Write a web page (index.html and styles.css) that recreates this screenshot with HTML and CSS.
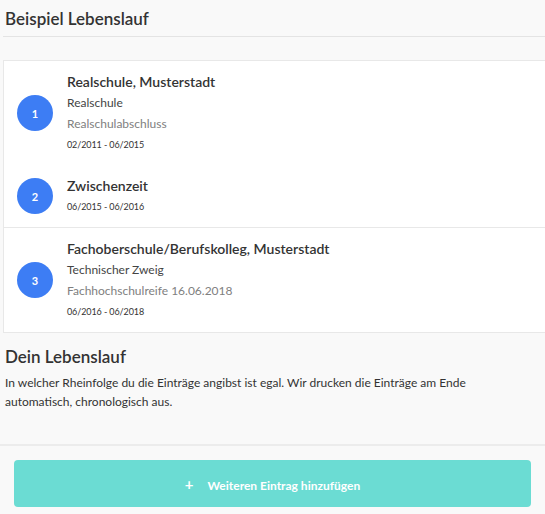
FILE: index.html
```html
<!DOCTYPE html>
<html lang="de">
<head>
    <meta charset="UTF-8">
    <title>Lebenslauf</title>
    <link rel="stylesheet" href="styles.css">
</head>
<body>

<div class="section-head">
    <h2>Beispiel Lebenslauf</h2>
</div>

<div class="example-card">
    <div class="entry">
        <div class="entry-number">1</div>
        <div class="entry-body">
            <div class="entry-title">Realschule, Musterstadt</div>
            <div class="entry-sub">Realschule</div>
            <div class="entry-degree">Realschulabschluss</div>
            <div class="entry-date">02/2011 - 06/2015</div>
        </div>
    </div>
    <div class="entry entry-line">
        <div class="entry-number">2</div>
        <div class="entry-body">
            <div class="entry-title">Zwischenzeit</div>
            <div class="entry-date">06/2015 - 06/2016</div>
        </div>
    </div>
    <div class="entry">
        <div class="entry-number">3</div>
        <div class="entry-body">
            <div class="entry-title">Fachoberschule/Berufskolleg, Musterstadt</div>
            <div class="entry-sub">Technischer Zweig</div>
            <div class="entry-degree">Fachhochschulreife 16.06.2018</div>
            <div class="entry-date">06/2016 - 06/2018</div>
        </div>
    </div>
</div>

<div class="own-cv">
    <h3>Dein Lebenslauf</h3>
    <p>In welcher Rheinfolge du die Einträge angibst ist egal. Wir drucken die Einträge am Ende automatisch, chronologisch aus.</p>
</div>

<div class="actions">
    <button class="add-button"><span class="plus">+</span>Weiteren Eintrag hinzufügen</button>
</div>

</body>
</html>
```

FILE: styles.css
```css
body {
    font-family: Lato, "Noto Sans", sans-serif;
    margin: 0;
    padding: 0;
    background-color: #f9f9f9;
    color: #333;
    width: 545px;
    overflow: hidden;
}

.section-head {
    margin-left: 3px;
    border-bottom: 1px solid #e4e4e4;
    height: 36px;
}

.section-head h2 {
    margin: 0;
    padding: 8px 0 0 2px;
    font-size: 17px;
    font-weight: 600;
    line-height: 22px;
    color: #333;
}

.example-card {
    margin: 23px 0 0 3px;
    background-color: #fff;
    border: 1px solid #e8e8e8;
    border-right: none;
}

.entry {
    display: flex;
    align-items: center;
    padding: 10px 0 10px 13px;
}

.entry-line {
    border-bottom: 1px solid #e8e8e8;
}

.entry-number {
    width: 36px;
    height: 36px;
    border-radius: 50%;
    background-color: #3d7df4;
    color: #fff;
    font-size: 11px;
    font-weight: bold;
    display: flex;
    align-items: center;
    justify-content: center;
    flex-shrink: 0;
}

.entry-body {
    margin-left: 14px;
}

.entry-body div {
    line-height: 21px;
}

.entry-title {
    font-size: 14px;
    font-weight: 600;
    color: #333;
}

.entry-sub {
    font-size: 12px;
    color: #444;
}

.entry-degree {
    font-size: 12px;
    color: #808080;
}

.entry-date {
    font-size: 9px;
    letter-spacing: -0.1px;
    color: #333;
}

.own-cv {
    padding: 13px 5px 0 5px;
    border-bottom: 2px solid #ececec;
    height: 98px;
}

.own-cv h3 {
    margin: 0;
    font-size: 17px;
    font-weight: 600;
    line-height: 22px;
}

.own-cv p {
    margin: 5px 0 0 0;
    max-width: 470px;
    font-size: 12px;
    line-height: 19px;
    color: #333;
}

.actions {
    padding: 14px 14px 0 14px;
}

.add-button {
    width: 100%;
    height: 47px;
    background-color: #6bdcd3;
    border: none;
    border-radius: 4px;
    color: #fff;
    font-family: Lato, "Noto Sans", sans-serif;
    font-size: 12px;
    font-weight: bold;
    cursor: pointer;
}

.plus {
    font-size: 15px;
    margin-right: 14px;
}
```
